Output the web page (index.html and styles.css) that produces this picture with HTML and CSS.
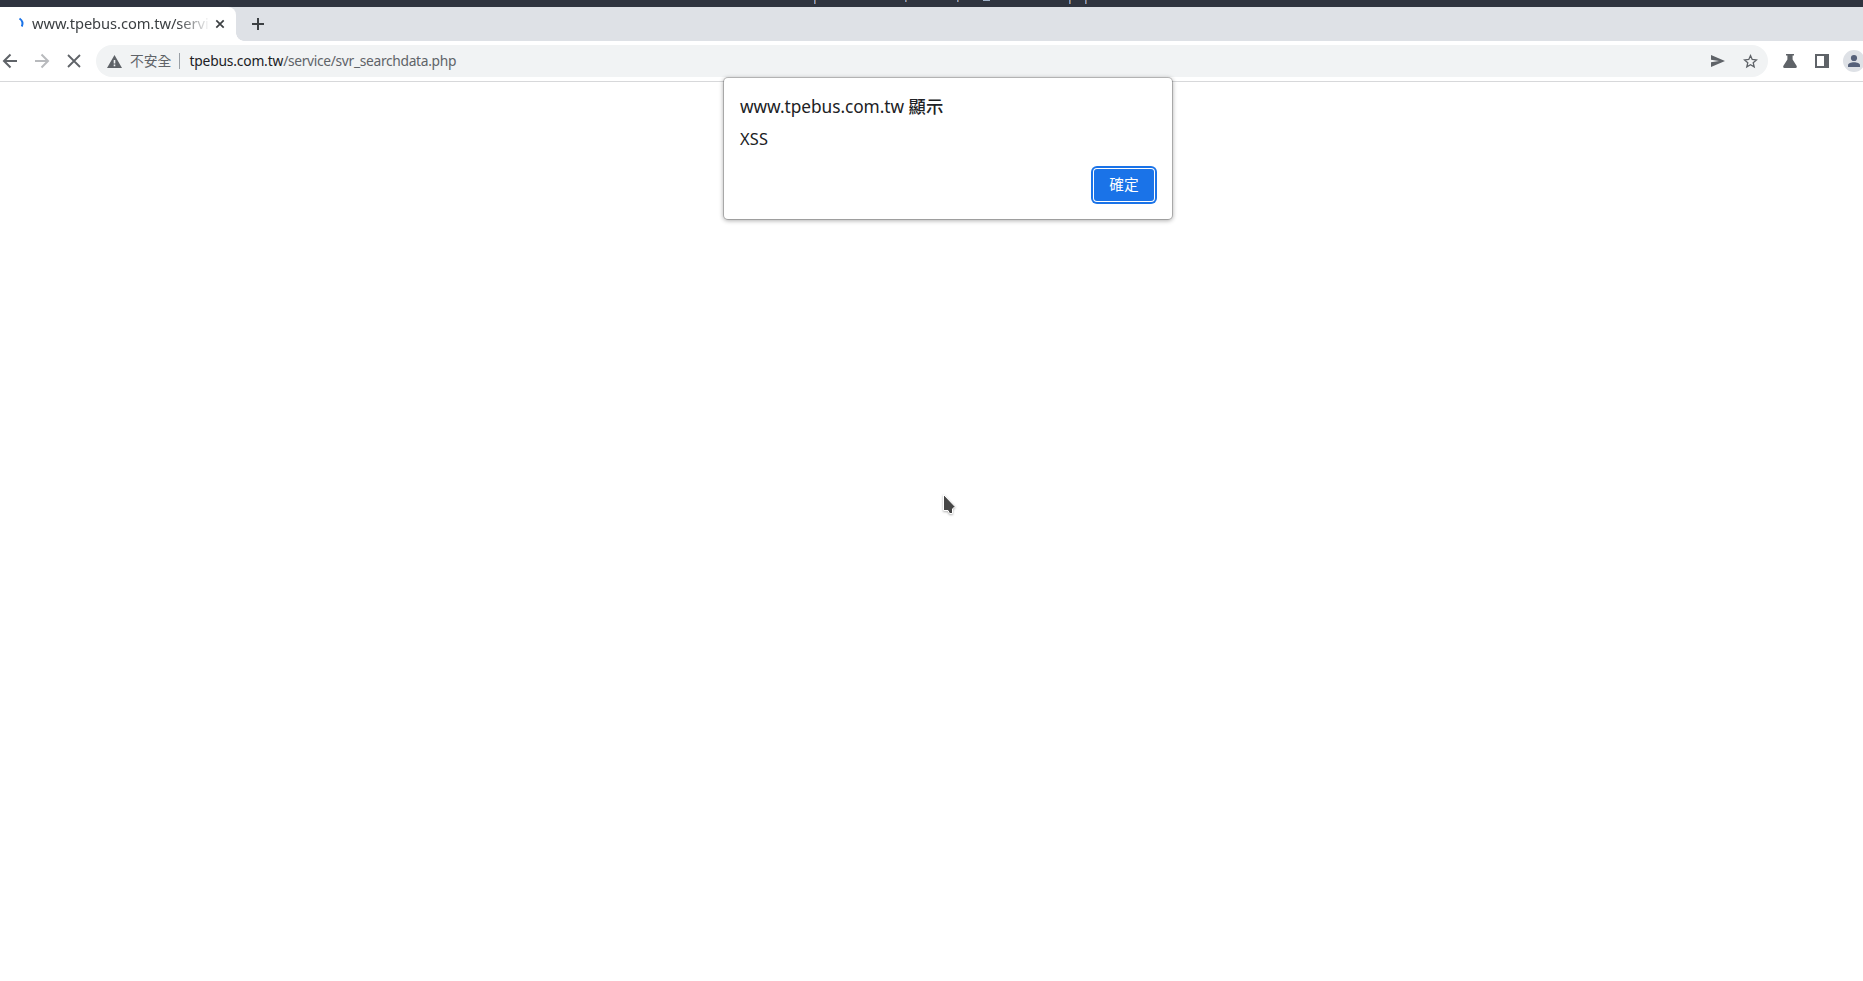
FILE: index.html
```html
<!DOCTYPE html>
<html lang="zh-Hant">
<head>
	<title>www.tpebus.com.tw/service/svr_searchdata.php</title>
	<meta charset="utf-8">
	<link rel="stylesheet" href="styles.css">
</head>

<body>
	<div class="desktop-bar">
		<svg width="1863" height="7" shape-rendering="crispEdges">
			<path fill="#7096ca" d="M814 0h1v4h-1zM905 0h1v2h-1zM957 0h1v2h-1zM1069 0h1v4h-1zM1085 0h1v4h-1z"/>
			<path fill="#967454" d="M815 0h1v4h-1zM906 0h1v2h-1zM958 0h1v2h-1zM1070 0h1v4h-1zM1086 0h1v4h-1z"/>
			<path fill="#9fb1c8" d="M983 0h7v1h-7z"/>
		</svg>
	</div>

	<div class="tab-strip">
		<div class="tab">
			<svg class="spinner" width="8" height="12" viewBox="0 0 8 12"><path d="M1.5 1.5Q6 4.5 3.8 9.5" fill="none" stroke="#1a73e8" stroke-width="2"/></svg>
			<span class="tab-title">www.tpebus.com.tw/servi</span>
			<svg class="tab-close" width="10" height="10" viewBox="0 0 10 10"><path d="M1.3 1.3L8.7 8.7M8.7 1.3L1.3 8.7" stroke="#3c4043" stroke-width="1.7"/></svg>
		</div>
		<svg class="new-tab" width="12" height="12" viewBox="0 0 12 12"><path d="M6 0V12M0 6H12" stroke="#3c4043" stroke-width="2"/></svg>
	</div>

	<div class="toolbar">
		<svg class="back" width="16" height="16" viewBox="0 0 16 16"><path d="M15 8H2.5M8.5 1.5L2 8L8.5 14.5" fill="none" stroke="#5f6368" stroke-width="2"/></svg>
		<svg class="forward" width="16" height="16" viewBox="0 0 16 16"><path d="M1 8H13.5M7.5 1.5L14 8L7.5 14.5" fill="none" stroke="#b8babd" stroke-width="2"/></svg>
		<svg class="stop" width="14" height="14" viewBox="0 0 14 14"><path d="M1 1L13 13M13 1L1 13" stroke="#5f6368" stroke-width="1.8"/></svg>
		<div class="omnibox">
			<svg class="warning" width="15" height="13" viewBox="0 0 15 13"><path fill="#5f6368" fill-rule="evenodd" d="M7.5 0L15 13H0zM6.7 5v3.5h1.6V5zM6.7 9.6v1.7h1.6V9.6z"/></svg>
			<span class="insecure">不安全</span>
			<span class="divider"></span>
			<span class="url"><b>tpebus.com.tw</b>/service/svr_searchdata.php</span>
			<svg class="send" width="14" height="12" viewBox="0 0 14 12"><path fill="#5f6368" d="M0 0L14 6L0 12V7.3L8 6L0 4.7z"/></svg>
			<svg class="star" width="15" height="15" viewBox="0 0 15 15"><path fill="none" stroke="#5f6368" stroke-width="1.3" d="M7.5 1.6L9.2 5.5L13.4 5.9L10.2 8.7L11.2 12.9L7.5 10.7L3.8 12.9L4.8 8.7L1.6 5.9L5.8 5.5z"/></svg>
		</div>
		<svg class="flask" width="14" height="14" viewBox="0 0 14 14"><path fill="#5f6368" d="M3 0H11V1.6H9.6V5.5L13.7 12Q14.2 14 12.5 14H1.5Q-.2 14 .3 12L4.4 5.5V1.6H3z"/></svg>
		<svg class="panel" width="14" height="14" viewBox="0 0 14 14"><path fill="#5f6368" fill-rule="evenodd" d="M0 0H14V14H0zM2 2V12H9V2z"/></svg>
		<svg class="avatar" width="22" height="22" viewBox="0 0 22 22"><circle cx="11" cy="11" r="11" fill="#dee1e6"/><circle cx="11" cy="8" r="3.1" fill="#56617a"/><path fill="#56617a" d="M5 17V15.3C5 13.2 8 12.2 11 12.2S17 13.2 17 15.3V17z"/></svg>
	</div>

	<div class="page"></div>

	<div class="dialog">
		<div class="dialog-title">www.tpebus.com.tw <span class="says">顯示</span></div>
		<div class="dialog-message">XSS</div>
		<button class="confirm">確定</button>
	</div>

	<svg class="cursor" width="18" height="26" viewBox="0 0 18 26"><path fill="#464646" stroke="#fff" stroke-width="1" d="M3.5 2.5L15 14.5L12.5 17V21.5H9.5L8 18.5H3.5z"/></svg>
</body>
</html>
```
FILE: styles.css
```css
* {
	box-sizing: border-box;
}

body {
	margin: 0;
	height: 981px;
	display: flex;
	flex-direction: column;
	overflow: hidden;
	background: #fff;
	color: #202124;
	font-family: "Noto Sans", "Noto Sans CJK TC", sans-serif;
}

svg {
	display: block;
	flex: none;
}

.desktop-bar {
	height: 7px;
	background: #2f343f;
}

.tab-strip {
	height: 34px;
	display: flex;
	align-items: center;
	background: #dee1e6;
}

.tab {
	position: relative;
	width: 236px;
	height: 34px;
	display: flex;
	align-items: center;
	padding-left: 18px;
	background: #fff;
	border-radius: 0 8px 0 0;
}

/* flared foot of the active tab */
.tab::after {
	content: "";
	position: absolute;
	left: 236px;
	bottom: 0;
	width: 8px;
	height: 8px;
	background: radial-gradient(circle at 100% 0, transparent 7.5px, #fff 8px);
}

.spinner {
	margin-top: -3px;
}

.tab-title {
	width: 176px;
	margin-left: 6px;
	padding-bottom: 2px;
	white-space: nowrap;
	font-size: 14.7px;
	letter-spacing: -0.07px;
	line-height: 22px;
	color: #3c4043;
	-webkit-mask-image: linear-gradient(to right, #000 146px, transparent 178px);
	mask-image: linear-gradient(to right, #000 146px, transparent 178px);
}

.tab-close {
	margin-left: 7px;
}

.new-tab {
	margin-left: 16px;
}

.toolbar {
	height: 41px;
	display: flex;
	align-items: center;
	padding-left: 2px;
	border-bottom: 1px solid #d7d8da;
	background: #fff;
}

.forward {
	margin-left: 16px;
}

.stop {
	margin-left: 17px;
}

.omnibox {
	flex: none;
	width: 1672px;
	height: 32px;
	display: flex;
	align-items: center;
	margin-left: 15px;
	padding: 0 10px 0 11px;
	border-radius: 16px;
	background: #f1f3f4;
	font-size: 13.8px;
	white-space: nowrap;
	color: #5f6368;
}

.insecure {
	margin-left: 8px;
	padding-bottom: 2px;
}

.divider {
	width: 1px;
	height: 16px;
	margin: 0 9px 0 8px;
	background: #9aa0a6;
}

.url {
	flex: 1;
	padding-bottom: 1px;
	letter-spacing: -0.32px;
}

.url b {
	font-weight: normal;
	letter-spacing: -0.17px;
	color: #202124;
}

.star {
	margin-left: 18px;
}

.flask {
	margin-left: 15px;
}

.panel {
	margin-left: 18px;
}

.avatar {
	margin-left: 14px;
}

.page {
	flex: 1;
}

.dialog {
	position: absolute;
	left: 724px;
	top: 78px;
	width: 448px;
	height: 141px;
	display: flex;
	flex-direction: column;
	padding: 16px 18px 16px 16px;
	border-radius: 4px;
	background: #fff;
	box-shadow: 0 0 0 1px rgba(0, 0, 0, .2), 0 1px 4px 1px rgba(0, 0, 0, .3);
}

.dialog-title {
	font-size: 17.3px;
	letter-spacing: -0.05px;
	line-height: 26px;
}

.says {
	font-weight: 500;
	letter-spacing: 0.2px;
}

.dialog-message {
	margin-top: 8px;
	font-size: 16.4px;
	letter-spacing: 0.2px;
	line-height: 22px;
}

.confirm {
	align-self: flex-end;
	width: 60px;
	height: 32px;
	margin: 19px 0 0;
	padding: 0 0 3px;
	border: 0;
	border-radius: 3px;
	background: #1a73e8;
	box-shadow: 0 0 0 1px #fff, 0 0 0 3px #1a73e8;
	color: #fff;
	font: 14.7px "Noto Sans", "Noto Sans CJK TC", sans-serif;
}

.cursor {
	position: absolute;
	left: 940px;
	top: 492px;
	filter: drop-shadow(0 1px 1px rgba(0, 0, 0, .3));
}
```
